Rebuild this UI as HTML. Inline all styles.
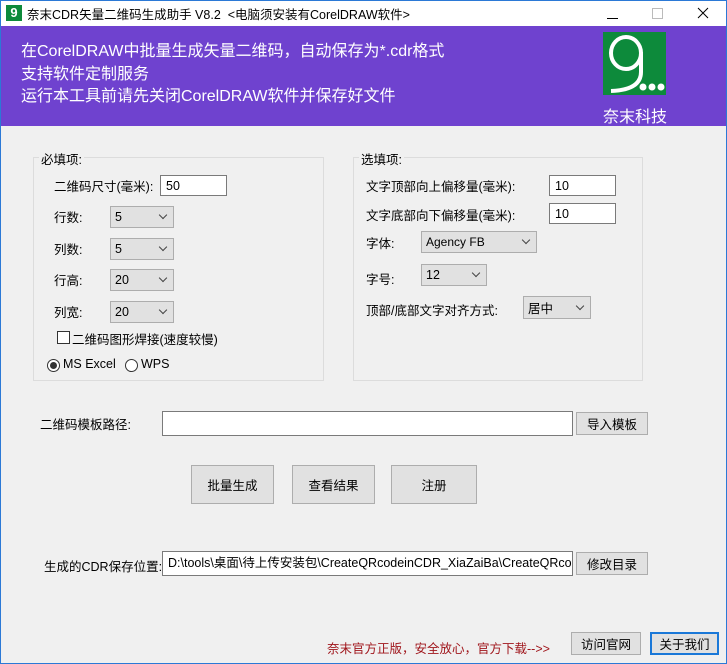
<!DOCTYPE html>
<html><head><meta charset="utf-8"><style>
*{box-sizing:border-box;margin:0;padding:0}
body{width:727px;height:664px;position:relative;overflow:hidden;background:#f0f0f0;font-family:"Liberation Sans","Microsoft YaHei","Noto Sans CJK SC",sans-serif;font-size:12.5px;color:#000}
.a{position:absolute;white-space:nowrap}
.frame{position:absolute;left:0;top:0;width:727px;height:664px;border:1px solid #2b79d6;pointer-events:none}
.title{left:0;top:0;width:727px;height:26px;background:#fff}
.purple{left:0;top:26px;width:727px;height:100px;background:#6f42cf;color:#fff;font-size:16px}
.gb{border:1px solid #dcdcdc}
.gl{background:#f0f0f0;padding:0 2px}
.inp{background:#fff;border:1px solid #7a7a7a;padding:2px 5px;line-height:16px}
.cb{background:#e1e1e1;border:1px solid #adadad;padding:0 4px;display:flex;align-items:center;justify-content:space-between}
.cb:after{content:"";width:5px;height:5px;border-right:1px solid #444;border-bottom:1px solid #444;transform:rotate(45deg);margin-top:-4px;margin-right:3px}
.btn{background:#e1e1e1;border:1px solid #adadad;display:flex;align-items:center;justify-content:center}
</style></head><body>
<div class="a title"></div>
<div class="a" style="left:6px;top:5px;width:16px;height:16px;background:#0d8a3b;color:#fff;font-size:13px;line-height:15px;text-align:center;font-weight:bold">9</div>
<div class="a" style="left:27px;top:4px;font-size:12.5px">奈末CDR矢量二维码生成助手 V8.2 &nbsp;&lt;电脑须安装有CorelDRAW软件&gt;</div>
<div class="a" style="left:607px;top:18px;width:11px;height:1px;background:#000"></div>
<div class="a" style="left:652px;top:8px;width:11px;height:11px;border:1px solid #bbb"></div>
<svg class="a" style="left:697px;top:7px" width="12" height="12"><path d="M1 1L11 11M11 1L1 11" stroke="#000" stroke-width="1"/></svg>
<div class="a purple"></div>
<div class="a" style="left:21px;top:41px;color:#fff;font-size:16px;line-height:22.5px">在CorelDRAW中批量生成矢量二维码，自动保存为*.cdr格式<br>支持软件定制服务<br>运行本工具前请先关闭CorelDRAW软件并保存好文件</div>
<svg class="a" style="left:603px;top:32px" width="63" height="63">
<rect width="63" height="63" fill="#0d8a3b"/>
<ellipse cx="23" cy="21" rx="15" ry="16" fill="none" stroke="#fff" stroke-width="4"/>
<path d="M38 20 V40 Q38 58 8 59" fill="none" stroke="#fff" stroke-width="4"/>
<circle cx="40" cy="55" r="3.5" fill="#fff"/><circle cx="49" cy="55" r="3.5" fill="#fff"/><circle cx="58" cy="55" r="3.5" fill="#fff"/>
</svg>
<div class="a" style="left:603px;top:103px;color:#fff;font-size:16px">奈末科技</div>

<div class="a gb" style="left:33px;top:157px;width:291px;height:224px"></div>
<div class="a gl" style="left:39px;top:149px">必填项:</div>
<div class="a" style="left:54px;top:176px">二维码尺寸(毫米):</div>
<div class="a inp" style="left:160px;top:175px;width:67px;height:21px">50</div>
<div class="a" style="left:54px;top:207px">行数:</div>
<div class="a cb" style="left:110px;top:206px;width:64px;height:22px">5</div>
<div class="a" style="left:54px;top:239px">列数:</div>
<div class="a cb" style="left:110px;top:238px;width:64px;height:22px">5</div>
<div class="a" style="left:54px;top:270px">行高:</div>
<div class="a cb" style="left:110px;top:269px;width:64px;height:22px">20</div>
<div class="a" style="left:54px;top:302px">列宽:</div>
<div class="a cb" style="left:110px;top:301px;width:64px;height:22px">20</div>
<div class="a" style="left:57px;top:331px;width:13px;height:13px;border:1px solid #333;background:#fff"></div>
<div class="a" style="left:72px;top:329px">二维码图形焊接(速度较慢)</div>
<div class="a" style="left:47px;top:359px;width:13px;height:13px;border:1px solid #333;border-radius:50%;background:#fff"></div>
<div class="a" style="left:50px;top:362px;width:7px;height:7px;border-radius:50%;background:#333"></div>
<div class="a" style="left:63px;top:357px">MS Excel</div>
<div class="a" style="left:125px;top:359px;width:13px;height:13px;border:1px solid #333;border-radius:50%;background:#fff"></div>
<div class="a" style="left:141px;top:357px">WPS</div>

<div class="a gb" style="left:353px;top:157px;width:290px;height:224px"></div>
<div class="a gl" style="left:359px;top:149px">选填项:</div>
<div class="a" style="left:366px;top:176px">文字顶部向上偏移量(毫米):</div>
<div class="a inp" style="left:549px;top:175px;width:67px;height:21px">10</div>
<div class="a" style="left:366px;top:205px">文字底部向下偏移量(毫米):</div>
<div class="a inp" style="left:549px;top:203px;width:67px;height:21px">10</div>
<div class="a" style="left:366px;top:233px">字体:</div>
<div class="a cb" style="left:421px;top:231px;width:116px;height:22px;font-size:12px">Agency FB</div>
<div class="a" style="left:366px;top:269px">字号:</div>
<div class="a cb" style="left:421px;top:264px;width:66px;height:22px">12</div>
<div class="a" style="left:366px;top:300px">顶部/底部文字对齐方式:</div>
<div class="a cb" style="left:523px;top:296px;width:68px;height:23px">居中</div>

<div class="a" style="left:40px;top:414px">二维码模板路径:</div>
<div class="a inp" style="left:162px;top:411px;width:411px;height:25px"></div>
<div class="a btn" style="left:576px;top:412px;width:72px;height:23px">导入模板</div>
<div class="a btn" style="left:191px;top:465px;width:83px;height:39px">批量生成</div>
<div class="a btn" style="left:292px;top:465px;width:83px;height:39px">查看结果</div>
<div class="a btn" style="left:391px;top:465px;width:86px;height:39px">注册</div>
<div class="a" style="left:44px;top:556px">生成的CDR保存位置:</div>
<div class="a inp" style="left:162px;top:551px;width:411px;height:25px;overflow:hidden;padding-top:3px">D:\tools\桌面\待上传安装包\CreateQRcodeinCDR_XiaZaiBa\CreateQRcodeinCDR</div>
<div class="a btn" style="left:576px;top:552px;width:72px;height:23px">修改目录</div>
<div class="a" style="left:327px;top:638px;color:#a0161c">奈末官方正版，安全放心，官方下载--&gt;&gt;</div>
<div class="a btn" style="left:571px;top:632px;width:70px;height:23px">访问官网</div>
<div class="a btn" style="left:650px;top:632px;width:69px;height:23px;border:2px solid #1a78d8">关于我们</div>
<div class="frame"></div>
</body></html>
